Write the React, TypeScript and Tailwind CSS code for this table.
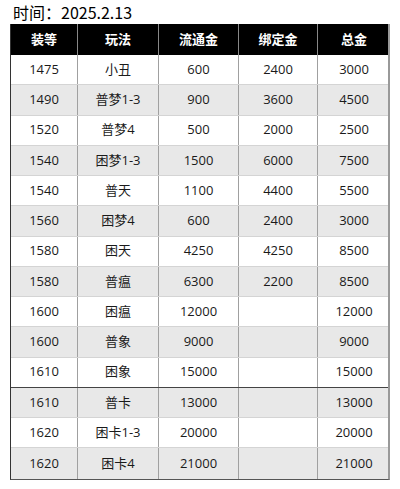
const rows: [string, string, string, string, string][] = [
  ["1475", "小丑", "600", "2400", "3000"],
  ["1490", "普梦1-3", "900", "3600", "4500"],
  ["1520", "普梦4", "500", "2000", "2500"],
  ["1540", "困梦1-3", "1500", "6000", "7500"],
  ["1540", "普天", "1100", "4400", "5500"],
  ["1560", "困梦4", "600", "2400", "3000"],
  ["1580", "困天", "4250", "4250", "8500"],
  ["1580", "普瘟", "6300", "2200", "8500"],
  ["1600", "困瘟", "12000", "", "12000"],
  ["1600", "普象", "9000", "", "9000"],
  ["1610", "困象", "15000", "", "15000"],
  ["1610", "普卡", "13000", "", "13000"],
  ["1620", "困卡1-3", "20000", "", "20000"],
  ["1620", "困卡4", "21000", "", "21000"],
];

const headers = ["装等", "玩法", "流通金", "绑定金", "总金"];
const grid = "grid grid-cols-[67px_81px_80px_79px_72px]";

export default function App() {
  return (
    <div
      className="w-[400px] h-[489px] bg-white text-[#1a1a1a]"
      style={{ fontFamily: '"Open Sans", "Noto Sans CJK SC", sans-serif' }}
    >
      <div
        className="pl-[13px] pt-[1px] h-[24px] text-[16px] leading-[23px] text-black"
        style={{ fontFamily: '"Noto Sans CJK SC", sans-serif' }}
      >
        时间：2025.2.13
      </div>
      <div className="ml-[10px] w-[380px] border-l border-l-[#333] border-r-2 border-r-[#999] border-b border-b-[#555]">
        <div className={`${grid} h-[31px] bg-black text-white text-[13px] font-bold`}>
          {headers.map((h, i) => (
            <div
              key={h}
              className={`flex items-center justify-center ${i < 4 ? "border-r border-r-[#888]" : ""}`}
            >
              {h}
            </div>
          ))}
        </div>
        {rows.map((r, ri) => (
          <div
            key={ri}
            className={`${grid} h-[30.25px] text-[13px] ${ri % 2 === 1 ? "bg-[#e8e8e8]" : "bg-white"} ${
              ri === 10 ? "border-b border-b-[#444]" : ri < 13 ? "border-b border-b-[#d4d4d4]" : ""
            }`}
          >
            {r.map((c, ci) => (
              <div
                key={ci}
                className={`flex items-center justify-center ${ci < 4 ? "border-r border-r-[#a0a0a0]" : ""}`}
              >
                {c}
              </div>
            ))}
          </div>
        ))}
      </div>
    </div>
  );
}
